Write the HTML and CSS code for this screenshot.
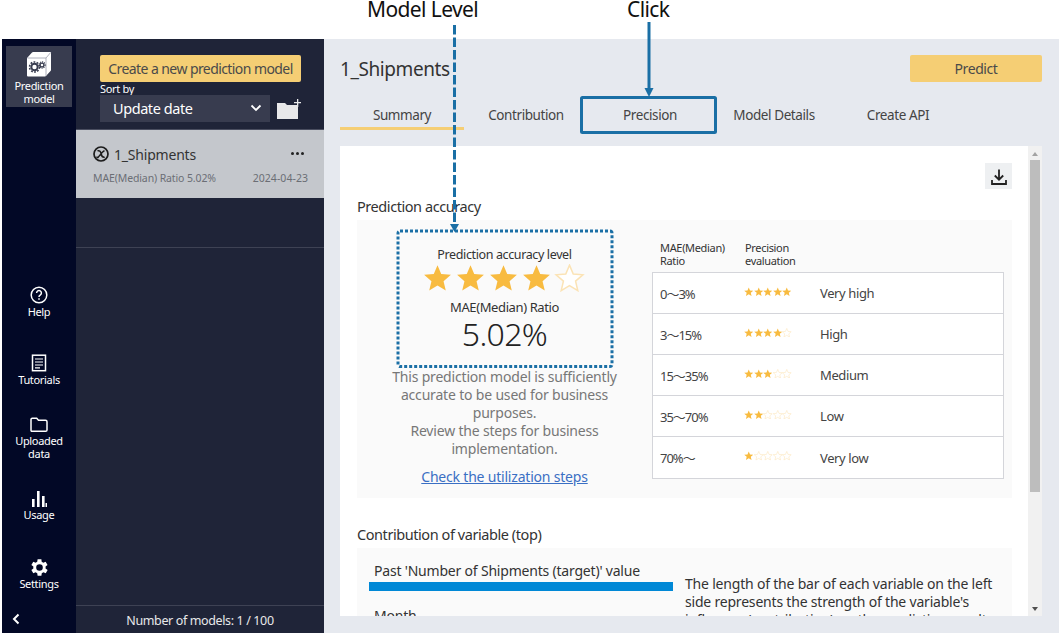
FILE: index.html
```html
<!DOCTYPE html>
<html lang="en">

<head>
    <meta charset="UTF-8">
    <meta name="viewport" content="width=device-width, initial-scale=1.0">
    <title>Prediction model</title>
    <link rel="stylesheet" href="styles.css">
</head>

<body>

    <svg class="defs" width="0" height="0">
        <symbol id="star" viewBox="0 0 24 24">
            <path d="M12 1l3.200 7.600 8.300.7-6.300 5.400 1.900 8.100L12 18.500l-7.100 4.300 1.900-8.100L.5 9.300l8.300-.7z" />
        </symbol>
    </svg>

    <div class="app">
        <nav class="sidebar">
            <a class="side-item active">
                <svg viewBox="0 0 26 26" width="26" height="26">
                    <path fill="#fff" d="M1 7.500Q1 7 1.500 6.500L6 1.500Q6.500 1 7 1h17.500q.5 0 .5.5V19q0 .5-.5 1l-4.500 5q-.4.400-1 .4H2q-1 0-1-1z" />
                    <path fill="none" stroke="#9a9cab" stroke-width=".8" d="M1.500 7h18.500l4.700-5.500M20 7v18" />
                    <circle cx="8.500" cy="16" r="3.200" fill="none" stroke="#383c4f" stroke-width="2" />
                    <circle cx="8.500" cy="16" r="5" fill="none" stroke="#383c4f" stroke-width="1.500" stroke-dasharray="1.800 1.340" />
                    <circle cx="16" cy="14" r="1.900" fill="none" stroke="#383c4f" stroke-width="1.300" />
                    <circle cx="16" cy="14" r="3.100" fill="none" stroke="#383c4f" stroke-width="1.100" stroke-dasharray="1.200 .83" />
                </svg>
                <span>Prediction<br>model</span>
            </a>
            <div class="side-links">
                <a class="side-item">
                    <svg viewBox="0 0 18 18" width="18" height="18" fill="none" stroke="#fff" stroke-width="1.500">
                        <circle cx="9" cy="9" r="7.800" />
                        <path d="M6.600 7a2.400 2.400 0 1 1 3.600 2.100c-.8.500-1.200 1-1.200 1.900" />
                        <path d="M9 12.300v1.500" />
                    </svg>
                    <span>Help</span>
                </a>
                <a class="side-item">
                    <svg viewBox="0 0 16 18" width="16" height="18" fill="none" stroke="#fff" stroke-width="1.500">
                        <rect x="1.500" y="1.200" width="13" height="15.500" />
                        <path d="M4 5h8M4 8h8M4 11h8M4 13.800h5" stroke-width="1.200" />
                    </svg>
                    <span>Tutorials</span>
                </a>
                <a class="side-item">
                    <svg viewBox="0 0 18 16" width="18" height="16" fill="none" stroke="#fff" stroke-width="1.500">
                        <path d="M1 2.500q0-1.300 1.300-1.300h4.400l1.800 2h7q1.500 0 1.500 1.500v8.300q0 1.300-1.300 1.300H2.300Q1 14.500 1 13.200z" />
                    </svg>
                    <span>Uploaded<br>data</span>
                </a>
                <a class="side-item">
                    <svg viewBox="0 0 16 16" width="16" height="16" fill="#fff">
                        <rect x="1" y="8" width="2.600" height="8" />
                        <rect x="6" y="0" width="2.600" height="16" />
                        <rect x="11" y="5" width="2.600" height="11" />
                        <rect x="14.500" y="12" width="1.500" height="4" />
                    </svg>
                    <span>Usage</span>
                </a>
                <a class="side-item">
                    <svg viewBox="3 3 18 18" width="17" height="17" fill="#fff">
                        <path d="M18.400 13a7.600 7.600 0 0 0 0-2l2.100-1.600-2-3.500-2.500 1a7.600 7.600 0 0 0-1.700-1L14 3.200h-4l-.4 2.700a7.600 7.600 0 0 0-1.700 1l-2.500-1-2 3.500L5.500 11a7.600 7.600 0 0 0 0 2l-2.100 1.600 2 3.500 2.500-1a7.600 7.600 0 0 0 1.700 1l.4 2.700h4l.4-2.700a7.600 7.600 0 0 0 1.700-1l2.500 1 2-3.500zM12 15.500a3.500 3.500 0 1 1 0-7 3.500 3.500 0 0 1 0 7z" />
                    </svg>
                    <span>Settings</span>
                </a>
            </div>
            <div class="collapse">
                <svg viewBox="0 0 8 12" width="8" height="12" fill="none" stroke="#fff" stroke-width="2">
                    <path d="M6.500 1.500L2 6l4.500 4.500" />
                </svg>
            </div>
        </nav>

        <aside class="model-panel">
            <div class="panel-top">
                <button class="yellow-btn new-model">Create a new prediction model</button>
                <div class="sort-label">Sort by</div>
                <div class="sort-row">
                    <div class="sort-select">
                        <span>Update date</span>
                        <svg viewBox="0 0 12 8" width="12" height="8" fill="none" stroke="#fff" stroke-width="1.800">
                            <path d="M1.500 1.500L6 6l4.500-4.500" />
                        </svg>
                    </div>
                    <svg class="folder-add" viewBox="0 0 24 20" width="24" height="20" fill="#e8e8ea">
                        <path d="M0 4h8l2 2h11v14H0z" />
                        <path d="M20 0h1.300v3H24v1.300h-2.700V8H20V4.300h-3V3h3z" />
                    </svg>
                </div>
            </div>
            <div class="model-row">
                <div class="model-name">
                    <svg viewBox="0 0 16 16" width="16" height="16" fill="none" stroke="#1c1c1c">
                        <circle cx="8" cy="8" r="7" stroke-width="1.700" />
                        <path d="M4.500 4.800c2.300-.6 3.200.8 3.700 3.200s1.300 3.600 3.500 3.200M11.500 4.600C9 6 7 9 5 11.500q-1.200.4-1-1" stroke-width="1.500" />
                    </svg>
                    <span>1_Shipments</span>
                    <span class="dots"><i></i><i></i><i></i></span>
                </div>
                <div class="model-meta">
                    <span>MAE(Median) Ratio 5.02%</span>
                    <span>2024-04-23</span>
                </div>
            </div>
            <div class="empty-row"></div>
            <div class="panel-foot">Number of models: 1 / 100</div>
        </aside>

        <main class="main">
            <div class="main-head">
                <h1>1_Shipments</h1>
                <button class="yellow-btn predict">Predict</button>
            </div>
            <div class="tabs">
                <a class="tab selected">Summary</a>
                <a class="tab">Contribution</a>
                <a class="tab">Precision</a>
                <a class="tab">Model Details</a>
                <a class="tab">Create API</a>
            </div>
            <div class="content-wrap">
                <div class="content">
                    <div class="download-row">
                        <button class="download">
                            <svg viewBox="0 0 18 18" width="18" height="18" fill="none" stroke="#222" stroke-width="1.800">
                                <path d="M9 1.500v10M4.800 7.500L9 11.700l4.200-4.200M2 12v4h14v-4" />
                            </svg>
                        </button>
                    </div>

                    <h2>Prediction accuracy</h2>
                    <section class="block accuracy">
                        <div class="level">
                            <div class="level-card">
                                <div class="level-title">Prediction accuracy level</div>
                                <div class="big-stars">
                                    <svg class="on"><use href="#star" /></svg>
                                    <svg class="on"><use href="#star" /></svg>
                                    <svg class="on"><use href="#star" /></svg>
                                    <svg class="on"><use href="#star" /></svg>
                                    <svg class="off"><use href="#star" /></svg>
                                </div>
                                <div class="level-sub">MAE(Median) Ratio</div>
                                <div class="level-value">5.02%</div>
                            </div>
                            <p class="level-note">This prediction model is sufficiently accurate to be used for business purposes.<br>Review the steps for business implementation.</p>
                            <a class="level-link">Check the utilization steps</a>
                        </div>
                        <div class="scale">
                            <div class="scale-head">
                                <span>MAE(Median)<br>Ratio</span>
                                <span>Precision<br>evaluation</span>
                            </div>
                            <div class="scale-table">
                                <div class="scale-row">
                                    <span>0～3%</span>
                                    <span class="mini-stars">
                                        <svg class="on"><use href="#star" /></svg><svg class="on"><use href="#star" /></svg><svg class="on"><use href="#star" /></svg><svg class="on"><use href="#star" /></svg><svg class="on"><use href="#star" /></svg>
                                    </span>
                                    <span>Very high</span>
                                </div>
                                <div class="scale-row">
                                    <span>3～15%</span>
                                    <span class="mini-stars">
                                        <svg class="on"><use href="#star" /></svg><svg class="on"><use href="#star" /></svg><svg class="on"><use href="#star" /></svg><svg class="on"><use href="#star" /></svg><svg class="off"><use href="#star" /></svg>
                                    </span>
                                    <span>High</span>
                                </div>
                                <div class="scale-row">
                                    <span>15～35%</span>
                                    <span class="mini-stars">
                                        <svg class="on"><use href="#star" /></svg><svg class="on"><use href="#star" /></svg><svg class="on"><use href="#star" /></svg><svg class="off"><use href="#star" /></svg><svg class="off"><use href="#star" /></svg>
                                    </span>
                                    <span>Medium</span>
                                </div>
                                <div class="scale-row">
                                    <span>35～70%</span>
                                    <span class="mini-stars">
                                        <svg class="on"><use href="#star" /></svg><svg class="on"><use href="#star" /></svg><svg class="off"><use href="#star" /></svg><svg class="off"><use href="#star" /></svg><svg class="off"><use href="#star" /></svg>
                                    </span>
                                    <span>Low</span>
                                </div>
                                <div class="scale-row">
                                    <span>70%～</span>
                                    <span class="mini-stars">
                                        <svg class="on"><use href="#star" /></svg><svg class="off"><use href="#star" /></svg><svg class="off"><use href="#star" /></svg><svg class="off"><use href="#star" /></svg><svg class="off"><use href="#star" /></svg>
                                    </span>
                                    <span>Very low</span>
                                </div>
                            </div>
                        </div>
                    </section>

                    <h2 class="second">Contribution of variable (top)</h2>
                    <section class="block contribution">
                        <div class="bars">
                            <div class="bar-label">Past 'Number of Shipments (target)' value</div>
                            <div class="bar"></div>
                            <div class="bar-label month">Month</div>
                        </div>
                        <p class="bars-note">The length of the bar of each variable on the left side represents the strength of the variable's influence (contribution) on the prediction result.</p>
                    </section>
                </div>
                <div class="scrollbar">
                    <span class="arrow up"></span>
                    <span class="thumb"></span>
                    <span class="arrow down"></span>
                </div>
            </div>
        </main>
    </div>

    <!-- annotations drawn over the screenshot -->
    <div class="note note-level">Model Level</div>
    <div class="note note-click">Click</div>
    <svg class="overlay" viewBox="0 0 1061 635" width="1061" height="635" fill="none" stroke="#1a6fa5" stroke-width="3">
        <path d="M454.500 25V225" stroke-dasharray="9.500 3" />
        <path d="M450 224h9l-4.500 8z" fill="#1a6fa5" stroke="none" />
        <path d="M649 22V90" />
        <path d="M644.500 88h9l-4.500 9z" fill="#1a6fa5" stroke="none" />
        <rect x="581.500" y="97.500" width="134" height="35" rx="1" />
        <rect x="398" y="231" width="214" height="135.500" rx="2" stroke-dasharray="3 2" />
    </svg>

</body>

</html>
```

FILE: styles.css
```css
* {
    box-sizing: border-box;
    letter-spacing: -0.03em;
}

body {
    margin: 0;
    background: #fff;
    font-family: "Noto Sans", "Noto Sans CJK JP", sans-serif;
    color: #333;
    width: 1061px;
    height: 635px;
    overflow: hidden;
    position: relative;
}

.defs {
    position: absolute;
}

.app {
    display: flex;
    width: 1057px;
    height: 594px;
    margin: 39px 0 0 2px;
}

/* left icon bar */
.sidebar {
    width: 74px;
    background: #020826;
    display: flex;
    flex-direction: column;
    align-items: center;
    padding-top: 7px;
    color: #fff;
}

.side-item {
    display: flex;
    flex-direction: column;
    align-items: center;
    justify-content: center;
    width: 66px;
    height: 68px;
    gap: 1px;
    font-size: 11px;
    line-height: 13px;
    text-align: center;
}

.side-item.active {
    height: 61px;
    background: #383c4f;
    gap: 2px;
    padding-top: 3px;
}

.side-links {
    margin-top: auto;
}

.collapse {
    display: flex;
    width: 100%;
    height: 25px;
    padding: 5px 0 0 10px;
    flex-shrink: 0;
}

/* model list */
.model-panel {
    width: 248px;
    background: #1f2438;
    display: flex;
    flex-direction: column;
    color: #fff;
}

.panel-top {
    height: 90px;
    padding: 16px 23px 0 24px;
}

.yellow-btn {
    border: none;
    border-radius: 2px;
    background: #f5ce74;
    color: #4a4a4a;
    font-family: inherit;
    font-size: 14px;
    padding: 0;
    height: 27px;
    white-space: nowrap;
}

.new-model {
    width: 201px;
    display: block;
    letter-spacing: -0.58px;
}

.sort-label {
    font-size: 11px;
    line-height: 13px;
}

.sort-row {
    display: flex;
    align-items: flex-end;
    justify-content: space-between;
}

.folder-add {
    margin-bottom: 3px;
}

.sort-select {
    width: 170px;
    height: 27px;
    background: #383c4f;
    display: flex;
    align-items: center;
    justify-content: space-between;
    padding: 0 8px 2px 13px;
    font-size: 14.500px;
}

.model-row {
    height: 69px;
    border-top: 1px solid #4a4e60;
    background: #c4c7cc;
    padding: 14px 8px 0 17px;
    color: #333;
    flex-shrink: 0;
}

.model-name {
    display: flex;
    align-items: center;
    gap: 5px;
    font-size: 14px;
    height: 20px;
}

.model-name span {
    letter-spacing: -0.2px;
}

.dots {
    margin-left: auto;
    margin-right: 12px;
    margin-top: -2px;
    display: flex;
    gap: 2px;
}

.dots i {
    width: 3px;
    height: 3px;
    border-radius: 50%;
    background: #222;
}

.model-meta {
    display: flex;
    justify-content: space-between;
    margin-top: 7px;
    padding-right: 8px;
    font-size: 10.500px;
    color: #6b6e75;
}

.model-meta span {
    letter-spacing: -0.12px;
}

.model-meta span:last-child {
    letter-spacing: 0.05px;
}

.empty-row {
    flex: 1;
    border-bottom: 1px solid #3e4254;
    max-height: 50px;
}

.panel-foot {
    margin-top: auto;
    height: 28px;
    border-top: 1px solid #3e4254;
    text-align: center;
    font-size: 12.500px;
    line-height: 30px;
    color: #e8e8ea;
}

/* main area */
.main {
    flex: 1;
    background: #e6e9ef;
    padding: 16px 17px 17px 16px;
    display: flex;
    flex-direction: column;
}

.main-head {
    display: flex;
    justify-content: space-between;
    align-items: center;
    height: 27px;
}

h1 {
    margin: 0;
    font-size: 19px;
    font-weight: 400;
    letter-spacing: -0.42px;
}

.predict {
    width: 132px;
}

.tabs {
    display: flex;
    margin-top: 15px;
    height: 33px;
}

.tab {
    width: 124px;
    text-align: center;
    font-size: 13.500px;
    line-height: 36px;
    color: #444;
}

.tab.selected {
    border-bottom: 3px solid #f5ce74;
}

.content-wrap {
    display: flex;
    margin-top: 16px;
    height: 470px;
}

.content {
    width: 688px;
    background: #fff;
    padding: 17px 16px 0 17px;
    overflow: hidden;
}

.download-row {
    display: flex;
    justify-content: flex-end;
    height: 26px;
}

.download {
    width: 27px;
    height: 26px;
    padding: 4px 0 0;
    border: none;
    background: #eef0f2;
}

h2 {
    margin: 7px 0 4px;
    font-size: 14.500px;
    line-height: 20px;
    font-weight: 400;
}

h2.second {
    margin-top: 26px;
}

.block {
    background: #fafafa;
    width: 655px;
}

.accuracy {
    display: flex;
    height: 278px;
}

.level {
    width: 295px;
    padding-top: 26px;
    text-align: center;
}

.level-card {
    height: 120px;
}

.level-title {
    font-size: 12.500px;
    line-height: 18px;
}

.big-stars {
    display: flex;
    justify-content: center;
    height: 27px;
    margin-left: -2px;
}

.big-stars svg {
    width: 33px;
    height: 28px;
    flex-shrink: 0;
}

.on {
    fill: #f8bb40;
}

.off {
    fill: #fff;
    stroke: #fbe3b5;
    stroke-width: 1.300px;
}

.level-sub {
    margin-top: 7px;
    font-size: 13px;
    line-height: 18px;
}

.level-value {
    font-size: 32px;
    line-height: 36px;
    font-weight: 300;
    color: #222;
    letter-spacing: -0.02em;
}

.level-note {
    margin: 2px 0 0;
    padding: 0 30px;
    font-size: 14px;
    line-height: 18px;
    color: #777;
    letter-spacing: -0.18px;
}

.level-link {
    display: inline-block;
    margin-top: 10px;
    font-size: 14px;
    line-height: 18px;
    color: #3a6fc4;
    text-decoration: underline;
    letter-spacing: -0.2px;
}

.scale-head {
    display: flex;
    padding: 21px 0 0 8px;
    height: 52px;
    font-size: 11px;
    line-height: 13px;
}

.scale-head span:first-child {
    width: 85px;
}

.scale-table {
    width: 352px;
    background: #fff;
    border: 1px solid #d4d5da;
}

.scale-row {
    display: grid;
    grid-template-columns: 84px 76px 1fr;
    align-items: center;
    height: 41px;
    padding-left: 7px;
    border-bottom: 1px solid #d4d5da;
    font-size: 13px;
    color: #444;
}

.scale-row span:first-child {
    letter-spacing: -1px;
}

.scale-row:last-child {
    border-bottom: none;
}

.mini-stars {
    display: flex;
    margin-top: -3px;
}

.mini-stars svg {
    width: 9.500px;
    height: 9.500px;
}

.contribution {
    display: flex;
    height: 100px;
    padding: 13px 0 0 12px;
}

.bars {
    width: 316px;
}

.bar-label {
    padding-left: 5px;
    font-size: 14px;
    line-height: 20px;
    letter-spacing: -0.2px;
}

.bar-label.month {
    margin-top: 15px;
}

.bar {
    width: 304px;
    height: 9px;
    margin-top: 1px;
    background: #0088d6;
}

.bars-note {
    margin: 14px 0 0;
    width: 320px;
    font-size: 14px;
    line-height: 18px;
    letter-spacing: -0.2px;
}

.scrollbar {
    width: 14px;
    background: #f1f1f1;
    display: flex;
    flex-direction: column;
    align-items: center;
    padding: 4px 0;
}

.arrow {
    width: 0;
    height: 0;
    border-left: 3.500px solid transparent;
    border-right: 3.500px solid transparent;
}

.arrow.up {
    border-bottom: 4px solid #a3a3a3;
    margin-top: 2px;
}

.arrow.down {
    border-top: 4px solid #505050;
    margin-top: auto;
    margin-bottom: 1px;
}

.thumb {
    width: 10px;
    height: 332px;
    margin-top: 4px;
    background: #bdbdbd;
}

/* annotations */
.note {
    position: absolute;
    top: 0;
    font-size: 21px;
    line-height: 18px;
    color: #111;
    white-space: nowrap;
    letter-spacing: -0.6px;
}

.note-level {
    left: 367px;
}

.note-click {
    left: 627px;
}

.overlay {
    position: absolute;
    left: 0;
    top: 0;
}
```
